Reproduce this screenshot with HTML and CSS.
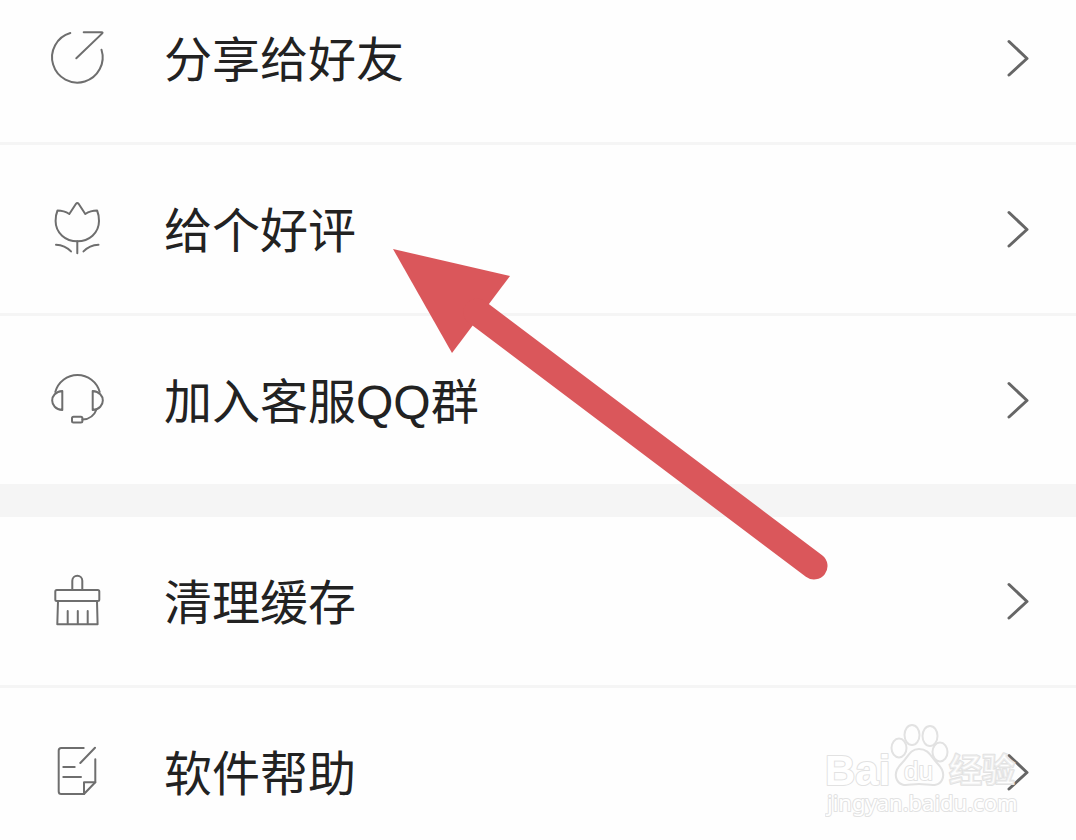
FILE: index.html
```html
<!DOCTYPE html>
<html lang="zh-CN">
<head>
  <meta charset="UTF-8" />
  <meta name="viewport" content="width=device-width, initial-scale=1" />
  <title>设置</title>
  <link rel="stylesheet" href="styles.css">
</head>
<body>
  <main class="screen">
    <div class="menu">

      <nav class="menu-group">
        <a class="menu-item" href="#share">
          <svg class="icon" viewBox="0 0 60 60" aria-hidden="true">
            <path d="M23.3 5A25.3 25.3 0 1 0 54.5 21.7" />
            <path d="M36.7 4.2H54.5Q56.4 4.2 55 5.6L29.3 30.3" />
          </svg>
          <span class="label">分享给好友</span>
          <svg class="chevron" viewBox="0 0 24 40" aria-hidden="true"><path d="M3 3.5L21 20.5L3 37" /></svg>
        </a>
        <a class="menu-item" href="#rate">
          <svg class="icon" viewBox="0 0 60 60" aria-hidden="true">
            <path d="M10.5 11.5Q17 11.5 22.3 15L29 4.8Q30.3 3 31.6 4.8L38.3 15Q43.5 11.5 50.1 11.5Q52 16 52 22C52 34 42 42.3 30.3 42.3S8.600 34 8.600 22Q8.600 16 10.5 11.5Z" />
            <path d="M30.3 42.3V54.3M9 45.7Q18 46 24 52.4M51.5 45.7Q42.5 46 36.5 52.4" />
          </svg>
          <span class="label">给个好评</span>
          <svg class="chevron" viewBox="0 0 24 40" aria-hidden="true"><path d="M3 3.5L21 20.5L3 37" /></svg>
        </a>
        <a class="menu-item" href="#group">
          <svg class="icon" viewBox="0 0 60 60" aria-hidden="true">
            <path d="M8.3 22A23 23 0 0 1 52.7 22" />
            <path d="M15.3 21V40C1.8 39 1.8 22 15.3 21ZM45.7 21V40C59.2 39 59.2 22 45.7 21Z" />
            <path d="M49.5 39.5Q46 49 35.5 49.6" />
            <rect x="25" y="46.7" width="10.4" height="5.8" rx="1.5" />
          </svg>
          <span class="label">加入客服QQ群</span>
          <svg class="chevron" viewBox="0 0 24 40" aria-hidden="true"><path d="M3 3.5L21 20.5L3 37" /></svg>
        </a>
      </nav>

      <nav class="menu-group">
        <a class="menu-item" href="#cache">
          <svg class="icon" viewBox="0 0 60 60" aria-hidden="true">
            <path d="M25.3 19V9.8A5 5 0 0 1 35.3 9.8V19" />
            <rect x="8.3" y="19" width="44" height="11" rx="1.5" />
            <path d="M11 30L10.3 53.3H50.6L50 30M20.7 40V53M30.8 40V53M40.7 40V53" />
          </svg>
          <span class="label">清理缓存</span>
          <svg class="chevron" viewBox="0 0 24 40" aria-hidden="true"><path d="M3 3.5L21 20.5L3 37" /></svg>
        </a>
        <a class="menu-item" href="#help">
          <svg class="icon" viewBox="0 0 60 60" aria-hidden="true">
            <path d="M36.7 6H14.2Q11.7 6 11.7 8.5V49.5Q11.7 52 14.2 52H37L48.3 40.3V17.3" />
            <path d="M37 52V40.3H48.3M48 5.7L33.3 21" />
            <path d="M16.3 25H27.7M16.3 35H34" />
          </svg>
          <span class="label">软件帮助</span>
          <svg class="chevron" viewBox="0 0 24 40" aria-hidden="true"><path d="M3 3.5L21 20.5L3 37" /></svg>
        </a>
      </nav>

    </div>

    <!-- Pointer to the rating entry -->
    <svg class="pointer" viewBox="0 0 436 332" aria-hidden="true">
      <polygon points="0,0 117,27 59,104" />
      <line x1="84" y1="63" x2="421" y2="317" />
    </svg>

    <!-- Site watermark -->
    <svg class="watermark" viewBox="0 0 200 100" role="img" aria-label="Baidu 经验">
      <g class="paw">
        <ellipse cx="74" cy="28" rx="7.5" ry="9.5" />
        <ellipse cx="87" cy="15" rx="7.5" ry="10" />
        <ellipse cx="105" cy="16" rx="7.5" ry="10" />
        <ellipse cx="115" cy="32" rx="7.5" ry="9.5" />
        <path d="M94 29C104 29 106 37 112 43C118 49 120 54 117 60C113 68 104 64 94 64S76 68 72 60C69 54 72 48 77 43C83 37 85 29 94 29Z" />
      </g>
      <text class="mark-bai" x="0" y="65">Bai</text>
      <text class="mark-du" x="79" y="60">du</text>
      <text class="mark-cn" x="124" y="62">经验</text>
      <text class="mark-url" x="2" y="91">jingyan.baidu.com</text>
    </svg>
  </main>
</body>
</html>
```
FILE: styles.css
```css
:root {
  --bg: #fefefe;
  --band: #f5f5f5;
  --text: #222;
  --icon: #6e6e6e;
  --chevron: #666;
  --pointer: #da575b;
  --mark: #e2e2e2;
}

* {
  box-sizing: border-box;
}

body {
  margin: 0;
  background: var(--bg);
  color: var(--text);
  font-family: "Liberation Sans", "Noto Sans CJK SC", sans-serif;
}

.screen {
  position: relative;
  height: 100vh;
  overflow: hidden;
}

/* list is scrolled a little, the first row is cut by the top edge */
.menu {
  margin-top: -26px;
}

.menu-group + .menu-group {
  border-top: 33px solid var(--band);
}

.menu-item {
  display: flex;
  align-items: center;
  height: 168px;
  padding: 0 46px 0 47px;
  box-sizing: content-box;
  color: inherit;
  text-decoration: none;
}

.menu-item + .menu-item {
  border-top: 3px solid var(--band);
}

.icon {
  flex: none;
  width: 60px;
  height: 60px;
  margin-right: 57px;
  fill: none;
  stroke: var(--icon);
  stroke-width: 2;
  stroke-linecap: round;
  stroke-linejoin: round;
}

.label {
  flex: 1;
  padding-top: 6px;
  font-size: 48px;
  line-height: 72px;
}

.chevron {
  flex: none;
  width: 24px;
  height: 40px;
  fill: none;
  stroke: var(--chevron);
  stroke-width: 3;
  stroke-linecap: round;
  stroke-linejoin: round;
}

.pointer {
  position: absolute;
  left: 393px;
  top: 249px;
  width: 436px;
  height: 332px;
  fill: var(--pointer);
  pointer-events: none;
}

.pointer line {
  stroke: var(--pointer);
  stroke-width: 27;
  stroke-linecap: round;
}

.watermark {
  position: absolute;
  left: 825px;
  top: 720px;
  width: 200px;
  height: 100px;
  fill: #fff;
  stroke: var(--mark);
  stroke-width: 2;
  stroke-linejoin: round;
  paint-order: stroke;
  pointer-events: none;
}

.paw {
  fill: none;
}

.mark-bai {
  font: bold 42px "Liberation Sans", sans-serif;
}

.mark-du {
  font: 26px "Liberation Sans", sans-serif;
}

.mark-cn {
  font: bold 33px "Noto Sans CJK SC", sans-serif;
  fill: rgba(255, 255, 255, 0.4);
}

.mark-url {
  font: 22px "Noto Sans", sans-serif;
}
```
